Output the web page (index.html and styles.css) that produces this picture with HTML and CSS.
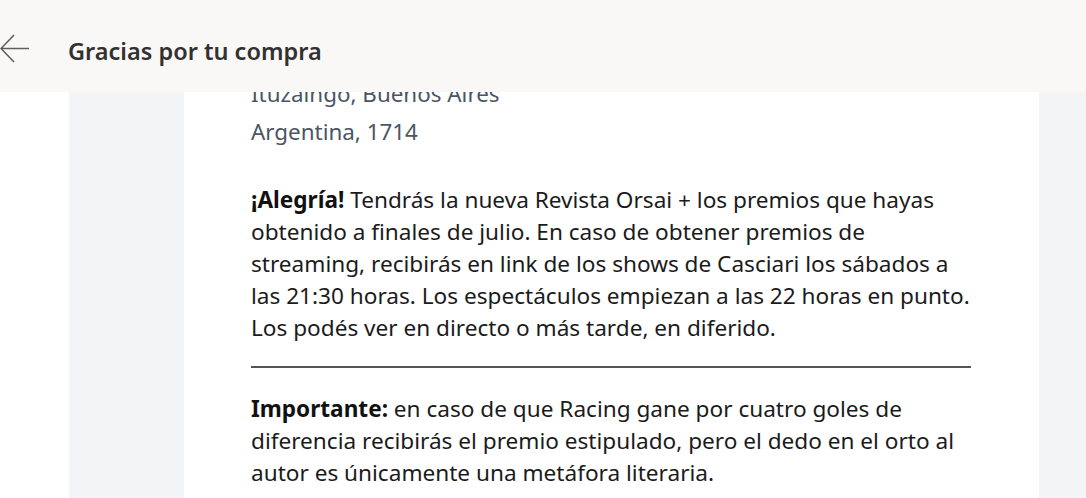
FILE: index.html
```html
<!DOCTYPE html>
<html lang="es">
<head>
<meta charset="utf-8">
<title>Gracias por tu compra</title>
<link rel="stylesheet" href="styles.css">
</head>
<body>
<header class="topbar">
  <svg class="back" width="30" height="30" viewBox="0 0 30 30" aria-hidden="true">
    <path d="M14 1 L1 14.5 L14 28 M1 14.5 H29" fill="none" stroke="#5f5f5f" stroke-width="1.6"/>
  </svg>
  <h1 class="title">Gracias por tu compra</h1>
</header>
<div class="page">
  <div class="rail"></div>
  <div class="shell">
    <main class="card">
      <p class="addr">Ituzaingó, Buenos Aires</p>
      <p class="addr">Argentina, 1714</p>
      <p class="para"><strong>¡Alegría!</strong> Tendrás la nueva Revista Orsai + los premios que hayas obtenido a finales de julio. En caso de obtener premios de streaming, recibirás en link de los shows de Casciari los sábados a las 21:30 horas. Los espectáculos empiezan a las 22 horas en punto. Los podés ver en directo o más tarde, en diferido.</p>
      <hr class="rule">
      <p class="para"><strong>Importante:</strong> en caso de que Racing gane por cuatro goles de diferencia recibirás el premio estipulado, pero el dedo en el orto al autor es únicamente una metáfora literaria.</p>
    </main>
  </div>
</div>
</body>
</html>
```
FILE: styles.css
```css
* { box-sizing: border-box; }
html, body { margin: 0; padding: 0; height: 100%; overflow: hidden; }
body {
  background: #ffffff;
  font-family: "Noto Sans", "Open Sans", sans-serif;
}
.topbar {
  position: fixed;
  top: 0; left: 0; right: 0;
  height: 92px;
  padding-top: 6px;
  background: #f9f8f7;
  display: flex;
  align-items: center;
  z-index: 2;
}
.back {
  display: block;
}
.title {
  margin: 4px 0 0 38px;
  font-size: 23.5px;
  font-weight: 600;
  color: #323130;
}
.page {
  display: flex;
  height: 100%;
}
.rail {
  width: 69px;
  flex: none;
  background: #ffffff;
}
.shell {
  flex: 1;
  background: #f3f4f6;
  padding-left: 115px;
  padding-right: 47px;
}
.card {
  background: #ffffff;
  height: 100%;
  padding: 75px 68px 0 67px;
  color: #1b1b1b;
}
.addr {
  margin: 0;
  font-size: 22.4px;
  line-height: 38px;
  color: #4b5563;
}
.para {
  margin: 0;
  font-size: 22.6px;
  line-height: 32px;
  color: #1b1b1b;
}
.addr + .para { margin-top: 33px; }
.para strong { font-weight: 700; color: #111; }
.rule {
  border: 0;
  height: 2px;
  background: #555555;
  margin: 22px 0 25px;
}
```
